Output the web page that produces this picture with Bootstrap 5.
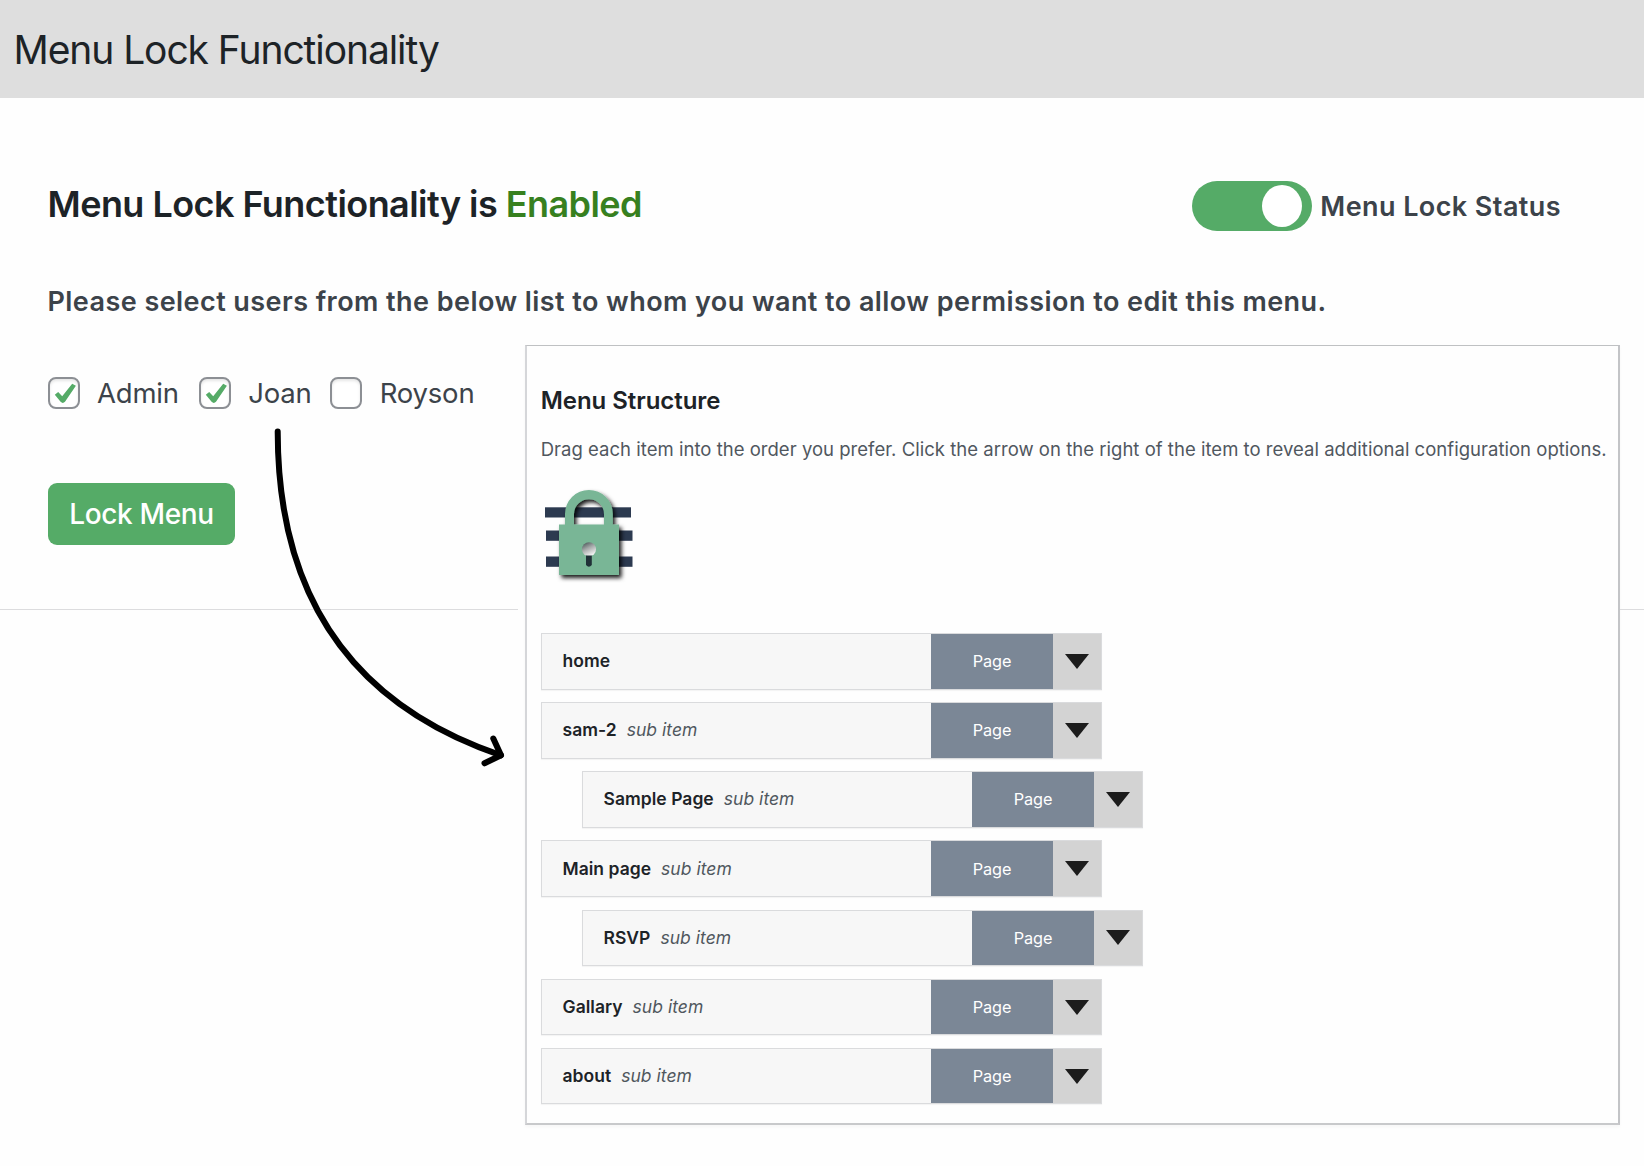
<!DOCTYPE html>
<html lang="en">
<head>
<meta charset="utf-8">
<title>Menu Lock Functionality</title>
<meta name="viewport" content="width=device-width, initial-scale=1">
<link rel="stylesheet" href="https://cdn.jsdelivr.net/npm/bootstrap@5.3.0/dist/css/bootstrap.min.css">
<style>
  body { font-family: Inter, "Liberation Sans", sans-serif; color: #3c434a; background: #fefefe; overflow: hidden; }
  .page-head { height: 98px; background: #dedede; padding: 2px 0 0 13.5px; }
  .page-head h1 { font-size: 39px; font-weight: 400; letter-spacing: -1.08px; color: #1d2327; }
  .status-row { padding: 83px 83px 0 47.5px; }
  .status-row h2 { font-size: 36px; font-weight: 600; letter-spacing: -.55px; line-height: 46px; color: #1d2327; }
  .state-on { color: #37801f; }
  .lock-switch { width: 120px; height: 50px; border-radius: 25px; background: #55ab67; padding: 4px 10px; }
  .lock-knob { width: 40px; height: 42px; border-radius: 50%; background: #fff; }
  .status-label { font-size: 27px; font-weight: 600; letter-spacing: .42px; line-height: 48px; padding-top: 2px; margin-left: 8px; }
  .intro { font-size: 27px; font-weight: 600; letter-spacing: .44px; line-height: 40px; margin-top: 51px; padding-left: 47.5px; white-space: nowrap; }
  .work-area { margin-top: 23px; }
  .form-col { width: 518px; height: 265px; margin-right: 7px; padding: 32px 0 0 48px; border-bottom: 1px solid #dcdcde; }
  .user-opt { font-size: 27.5px; line-height: 32px; letter-spacing: -.2px; }
  .tick-box { width: 32px; height: 32px; border: 2px solid #8c8f94; border-radius: 8px; background: #fff; box-shadow: inset 0 2px 3px rgba(0,0,0,.1); margin-right: 17px; }
  .opt-joan { margin-left: 20.5px; }
  .opt-royson { margin-left: 18.5px; }
  .opt-royson .tick-box { margin-right: 17.5px; }
  .btn-lock { --bs-btn-color: #fff; --bs-btn-bg: #55ab67; --bs-btn-hover-bg: #4a9a5b; --bs-btn-hover-color: #fff; width: 187px; height: 62px; margin-top: 74px; border: 0; border-radius: 9px; font-size: 28px; font-weight: 500; letter-spacing: -.35px; padding: 0; }
  .edge-col { width: 24px; height: 265px; border-bottom: 1px solid #dcdcde; }
  .structure { width: 1095px; height: 780px; background: #fefefe; border: solid; border-width: 1px 2px 2px; border-color: #bfc1c3 #c3c4c7 #c8c9cb #d5d6d9; padding: 40px 0 0 13px; box-shadow: 0 2px 3px rgba(0,0,0,.03); }
  .structure h3 { font-size: 24px; font-weight: 600; line-height: 30px; letter-spacing: -.05px; color: #1d2327; padding-left: .7px; }
  .structure-hint { font-size: 18.5px; line-height: 24px; letter-spacing: .025px; margin: 21px 0 0; padding-left: .7px; white-space: nowrap; color: #50575e; }
  .lock-art { display: block; margin-top: 24px; }
  .menu-rows { margin: 43px 0 0 .5px; gap: 12.67px; }
  .menu-row { width: 561.5px; height: 56.5px; background: #f7f7f7; border: 1px solid #dadbdd; border-bottom-width: 1.5px; box-shadow: 0 1px 1px rgba(0,0,0,.04); }
  .menu-row.nested { margin-left: 41px; }
  .row-name { font-size: 17.5px; font-weight: 600; letter-spacing: .03px; color: #1d2327; padding-left: 21px; }
  .row-sub { font-size: 17.5px; font-style: italic; font-weight: 400; color: #50575e; margin-left: 10px; }
  .row-kind { width: 122px; background: #7b8796; color: #fff; font-size: 16.3px; letter-spacing: -.1px; }
  .row-arrow { width: 48px; background: #d3d3d3; }
  .pointer { left: 268px; top: 420px; }
</style>
</head>
<body class="position-relative vh-100">
  <header class="page-head d-flex align-items-center">
    <h1 class="m-0">Menu Lock Functionality</h1>
  </header>

  <main>
    <div class="status-row d-flex justify-content-between">
      <h2 class="m-0">Menu Lock Functionality is <span class="state-on">Enabled</span></h2>
      <div class="d-flex">
        <div class="lock-switch d-flex justify-content-end" role="switch" aria-checked="true"><span class="lock-knob"></span></div>
        <span class="status-label">Menu Lock Status</span>
      </div>
    </div>
    <p class="intro mb-0">Please select users from the below list to whom you want to allow permission to edit this menu.</p>

    <div class="work-area d-flex align-items-start">
      <section class="form-col flex-shrink-0">
        <div class="d-flex">
          <div class="user-opt d-flex"><span class="tick-box"><svg class="d-block" width="28" height="28" viewBox="0 0 28 28"><path d="M4.800 15.800 L8.200 13 L12.200 17.200 L22.200 4.800 L25.900 6.800 L15 22.800 Q12.800 25 10.600 22.800 Z" fill="#55ab67"/></svg></span><span>Admin</span></div>
          <div class="user-opt opt-joan d-flex"><span class="tick-box"><svg class="d-block" width="28" height="28" viewBox="0 0 28 28"><path d="M4.800 15.800 L8.200 13 L12.200 17.200 L22.200 4.800 L25.900 6.800 L15 22.800 Q12.800 25 10.600 22.800 Z" fill="#55ab67"/></svg></span><span>Joan</span></div>
          <div class="user-opt opt-royson d-flex"><span class="tick-box"></span><span>Royson</span></div>
        </div>
        <button type="button" class="btn btn-lock">Lock Menu</button>
      </section>

      <section class="structure flex-shrink-0">
        <h3 class="m-0">Menu Structure</h3>
        <p class="structure-hint">Drag each item into the order you prefer. Click the arrow on the right of the item to reveal additional configuration options.</p>
        <svg class="lock-art" width="100" height="105" viewBox="540 485 100 105">
          <defs>
            <filter id="soft" x="-20%" y="-20%" width="150%" height="150%"><feDropShadow dx="2.500" dy="3" stdDeviation="2" flood-color="#000" flood-opacity=".9"/></filter>
            <linearGradient id="hole" x1="0" y1="0" x2=".5" y2="1"><stop offset="0" stop-color="#3c4a4c"/><stop offset=".5" stop-color="#a4a8a8"/><stop offset="1" stop-color="#f2f2f2"/></linearGradient>
          </defs>
          <g fill="#2c3a50">
            <rect x="545" y="507.300" width="86" height="10.200"/>
            <rect x="546" y="530.500" width="86.500" height="10.300"/>
            <rect x="546" y="556.500" width="86.500" height="10.300"/>
          </g>
          <path filter="url(#soft)" fill="#79b696" fill-rule="evenodd" d="M559 524.500 H565 V514 A23.900 24 0 0 1 612.800 514 V524.500 H619 V575 H559 Z M574 524.500 H604 V514 A15 14.700 0 0 0 574 514 Z"/>
          <circle cx="589" cy="549.300" r="7" fill="url(#hole)"/>
          <path d="M586 555.500 H591.800 V565 Q588.900 568.500 586 565 Z" fill="#203037"/>
        </svg>

        <div class="menu-rows d-flex flex-column">
          <div class="menu-row d-flex"><div class="row-name d-flex align-items-center flex-grow-1">home</div><div class="row-kind d-flex align-items-center justify-content-center">Page</div><div class="row-arrow d-flex align-items-center justify-content-center"><svg width="24" height="15" viewBox="0 0 24 15"><path d="M0 0H24L12 15Z" fill="#1c1c1c"/></svg></div></div>
          <div class="menu-row d-flex"><div class="row-name d-flex align-items-center flex-grow-1">sam-2<span class="row-sub">sub item</span></div><div class="row-kind d-flex align-items-center justify-content-center">Page</div><div class="row-arrow d-flex align-items-center justify-content-center"><svg width="24" height="15" viewBox="0 0 24 15"><path d="M0 0H24L12 15Z" fill="#1c1c1c"/></svg></div></div>
          <div class="menu-row nested d-flex"><div class="row-name d-flex align-items-center flex-grow-1">Sample Page<span class="row-sub">sub item</span></div><div class="row-kind d-flex align-items-center justify-content-center">Page</div><div class="row-arrow d-flex align-items-center justify-content-center"><svg width="24" height="15" viewBox="0 0 24 15"><path d="M0 0H24L12 15Z" fill="#1c1c1c"/></svg></div></div>
          <div class="menu-row d-flex"><div class="row-name d-flex align-items-center flex-grow-1">Main page<span class="row-sub">sub item</span></div><div class="row-kind d-flex align-items-center justify-content-center">Page</div><div class="row-arrow d-flex align-items-center justify-content-center"><svg width="24" height="15" viewBox="0 0 24 15"><path d="M0 0H24L12 15Z" fill="#1c1c1c"/></svg></div></div>
          <div class="menu-row nested d-flex"><div class="row-name d-flex align-items-center flex-grow-1">RSVP<span class="row-sub">sub item</span></div><div class="row-kind d-flex align-items-center justify-content-center">Page</div><div class="row-arrow d-flex align-items-center justify-content-center"><svg width="24" height="15" viewBox="0 0 24 15"><path d="M0 0H24L12 15Z" fill="#1c1c1c"/></svg></div></div>
          <div class="menu-row d-flex"><div class="row-name d-flex align-items-center flex-grow-1">Gallary<span class="row-sub">sub item</span></div><div class="row-kind d-flex align-items-center justify-content-center">Page</div><div class="row-arrow d-flex align-items-center justify-content-center"><svg width="24" height="15" viewBox="0 0 24 15"><path d="M0 0H24L12 15Z" fill="#1c1c1c"/></svg></div></div>
          <div class="menu-row d-flex"><div class="row-name d-flex align-items-center flex-grow-1">about<span class="row-sub">sub item</span></div><div class="row-kind d-flex align-items-center justify-content-center">Page</div><div class="row-arrow d-flex align-items-center justify-content-center"><svg width="24" height="15" viewBox="0 0 24 15"><path d="M0 0H24L12 15Z" fill="#1c1c1c"/></svg></div></div>
        </div>
      </section>
      <div class="edge-col flex-shrink-0"></div>
    </div>
  </main>

  <!-- Hand-drawn pointer from the user list to the menu structure -->
  <svg class="pointer position-absolute pe-none" width="245" height="355" viewBox="268 420 245 355" fill="none" stroke="#000" stroke-width="6" stroke-linecap="round" stroke-linejoin="round">
    <path d="M277.700 431.500 C277.700 595 350 704 501 755.300"/>
    <path d="M493.300 738.500 L501 755.300 L484.500 763.300"/>
  </svg>
<script src="https://cdn.jsdelivr.net/npm/bootstrap@5.3.0/dist/js/bootstrap.bundle.min.js"></script>
</body>
</html>
